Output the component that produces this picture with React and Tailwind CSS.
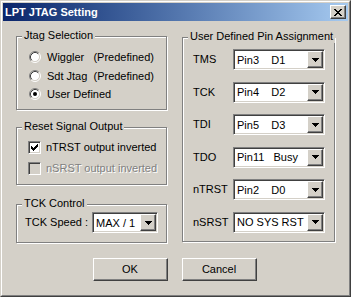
const raised =
  'border border-t-white border-l-white border-r-[#404040] border-b-[#404040] shadow-[inset_-1px_-1px_0_#808080] bg-[#D4D0C8]';
const sunken =
  'border border-t-[#808080] border-l-[#808080] border-r-white border-b-white shadow-[inset_1px_1px_0_#404040,inset_-1px_-1px_0_#D4D0C8]';

const CHECK = ['......X', '.....XX', 'X...XXX', 'XX.XXX.', 'XXXXX..', '.XXX...', '..X....'];
const CLOSE = ['XX....XX', '.XX..XX.', '..XXXX..', '...XX...', '..XXXX..', '.XX..XX.', 'XX....XX'];
const ARROW = ['XXXXXXX', '.XXXXX.', '..XXX..', '...X...'];

function Pixels({ rows, color = '#000', className }) {
  const w = rows[0].length;
  const h = rows.length;
  return (
    <svg width={w} height={h} viewBox={`0 0 ${w} ${h}`} className={className} shapeRendering="crispEdges">
      {rows.flatMap((r, y) =>
        r.split('').map((c, x) => (c === 'X' ? <rect key={`${x}-${y}`} x={x} y={y} width="1" height="1" fill={color} /> : null))
      )}
    </svg>
  );
}

function Radio({ checked }) {
  return (
    <svg width="12" height="12" viewBox="0 0 12 12" className="shrink-0">
      <circle cx="6" cy="6" r="4.5" fill="#fff" />
      <path d="M2.11 9.89 A5.5 5.5 0 0 1 9.89 2.11" stroke="#808080" fill="none" />
      <path d="M9.89 2.11 A5.5 5.5 0 0 1 2.11 9.89" stroke="#fff" fill="none" />
      <path d="M2.82 9.18 A4.5 4.5 0 0 1 9.18 2.82" stroke="#404040" fill="none" />
      <path d="M9.18 2.82 A4.5 4.5 0 0 1 2.82 9.18" stroke="#D4D0C8" fill="none" />
      {checked && <circle cx="6" cy="6" r="2" fill="#000" />}
    </svg>
  );
}

function Check({ checked, disabled }) {
  return (
    <span className={`w-[13px] h-[13px] shrink-0 flex items-center justify-center ${sunken} ${disabled ? 'bg-[#D4D0C8]' : 'bg-white'}`}>
      {checked && <Pixels rows={CHECK} color={disabled ? '#808080' : '#000'} />}
    </span>
  );
}

function Combo({ value, className }) {
  return (
    <div className={`h-[21px] flex bg-white ${sunken} ${className}`}>
      <span className="flex-1 pl-[3px] pt-[1px] flex items-center whitespace-pre overflow-hidden">{value}</span>
      <span className={`w-[16px] m-[1px] flex items-center justify-center ${raised}`}>
        <Pixels rows={ARROW} />
      </span>
    </div>
  );
}

function GroupBox({ title, className, children }) {
  return (
    <div className={`relative border border-[#808080] shadow-[inset_1px_1px_0_#fff,1px_1px_0_#fff] ${className}`}>
      <span className="absolute left-[5px] -top-[8px] bg-[#D4D0C8] px-[2px] leading-[13px] whitespace-pre">{title}</span>
      {children}
    </div>
  );
}

const pins = [
  ['TMS', 'Pin3    D1'],
  ['TCK', 'Pin4    D2'],
  ['TDI', 'Pin5    D3'],
  ['TDO', 'Pin11   Busy'],
  ['nTRST', 'Pin2    D0'],
  ['nSRST', 'NO SYS RST'],
];

export default function App() {
  return (
    <div className="w-[351px] h-[297px] bg-[#D4D0C8] border border-t-[#D4D0C8] border-l-[#D4D0C8] border-r-[#404040] border-b-[#404040] font-['Liberation_Sans',Arial,sans-serif] text-[11px] text-black">
      <div className="h-full p-[1px] flex flex-col border border-t-white border-l-white border-r-[#808080] border-b-[#808080]">
        {/* Title bar */}
        <div className="h-[18px] shrink-0 flex items-center pl-[2px] pr-[2px] bg-gradient-to-r from-[#0A246A] to-[#A6CAF0]">
          <span className="flex-1 text-white font-bold text-[11px] leading-none">LPT JTAG Setting</span>
          <span className={`w-[16px] h-[14px] flex items-center justify-center ${raised}`}>
            <Pixels rows={CLOSE} />
          </span>
        </div>

        {/* Body */}
        <div className="flex pl-[13px] pt-[15px]">
          <div className="w-[151px] flex flex-col">
            <GroupBox title="Jtag Selection" className="h-[74px]">
              <div className="flex flex-col pt-[11px] pl-[12px]">
                {[
                  ['Wiggler   (Predefined)', false],
                  ['Sdt Jtag  (Predefined)', false],
                  ['User Defined', true],
                ].map(([label, on]) => (
                  <div key={label} className="h-[18.5px] flex items-center gap-[6px]">
                    <Radio checked={on} />
                    <span className="whitespace-pre">{label}</span>
                  </div>
                ))}
              </div>
            </GroupBox>

            <GroupBox title="Reset Signal Output" className="h-[58px] mt-[17px]">
              <div className="flex flex-col pt-[9px] pl-[11px]">
                <div className="h-[21px] flex items-center gap-[5px]">
                  <Check checked />
                  <span>nTRST output inverted</span>
                </div>
                <div className="h-[21px] flex items-center gap-[5px]">
                  <Check disabled />
                  <span className="text-[#808080] [text-shadow:1px_1px_0_#fff]">nSRST output inverted</span>
                </div>
              </div>
            </GroupBox>

            <GroupBox title="TCK Control" className="h-[39px] mt-[19px]">
              <div className="flex items-center pt-[7px] pl-[8px]">
                <span className="w-[67px]">TCK Speed :</span>
                <Combo value="MAX / 1" className="w-[66px]" />
              </div>
            </GroupBox>
          </div>

          <GroupBox title="User Defined Pin Assignment" className="w-[153px] h-[205px] ml-[15px] mt-[1px]">
            <div className="flex flex-col gap-[11.5px] pt-[11px] pl-[10px]">
              {pins.map(([label, value]) => (
                <div key={label} className="h-[21px] flex items-center">
                  <span className="w-[40px]">{label}</span>
                  <Combo value={value} className="w-[92px]" />
                </div>
              ))}
            </div>
          </GroupBox>
        </div>

        {/* Buttons */}
        <div className="flex justify-center gap-[14px] mt-[15px] pr-[2px]">
          <button className={`w-[75px] h-[23px] ${raised}`}>OK</button>
          <button className={`w-[75px] h-[23px] ${raised}`}>Cancel</button>
        </div>
      </div>
    </div>
  );
}
